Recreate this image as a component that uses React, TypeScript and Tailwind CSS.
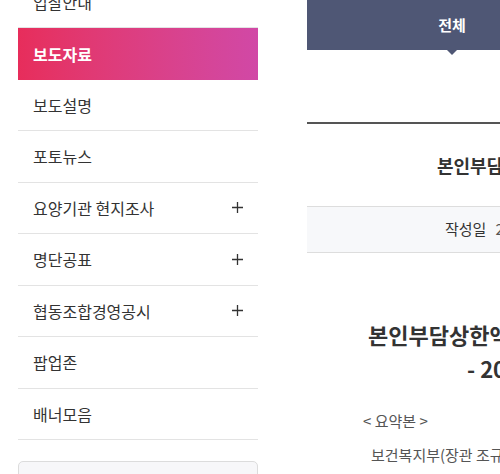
const font = "font-['Noto_Sans_CJK_KR','Noto_Sans',sans-serif]";

interface MenuItem {
  label: string;
  active?: boolean;
  sub?: boolean;
}

const menu: MenuItem[] = [
  { label: "입찰안내" },
  { label: "보도자료", active: true },
  { label: "보도설명" },
  { label: "포토뉴스" },
  { label: "요양기관 현지조사", sub: true },
  { label: "명단공표", sub: true },
  { label: "협동조합경영공시", sub: true },
  { label: "팝업존" },
  { label: "배너모음" },
];

function Plus() {
  return (
    <svg width="11" height="11" viewBox="0 0 11 11" className="shrink-0">
      <path d="M5.5 0v11M0 5.5h11" stroke="#333" strokeWidth="1.3" />
    </svg>
  );
}

function Sidebar() {
  return (
    <aside className="w-[240px] shrink-0 -mt-[23.5px]">
      <ul>
        {menu.map((m) =>
          m.active ? (
            <li
              key={m.label}
              className="h-[51.5px] flex items-center pl-[15px] bg-gradient-to-r from-[#e72d5b] to-[#d148a6] text-white font-bold text-[16px]"
            >
              {m.label}
            </li>
          ) : (
            <li
              key={m.label}
              className="h-[51.5px] flex items-center justify-between pl-[15px] pr-[15px] border-b border-[#e3e3e3] text-[#333] text-[16px]"
            >
              <span>{m.label}</span>
              {m.sub && <Plus />}
            </li>
          )
        )}
      </ul>
      <div className="mt-[20.5px] h-[40px] rounded-[5px] border border-[#dcdcdc] bg-[#f7f7f9]" />
    </aside>
  );
}

function Content() {
  return (
    <main className="ml-[49px] flex-1 min-w-0 overflow-hidden">
      <div className="relative w-[290px] h-[50px] bg-[#4f5775] flex items-center justify-center">
        <span className="text-white font-bold text-[15px]">전체</span>
        <span className="absolute left-1/2 -translate-x-1/2 top-[50px] w-0 h-0 border-x-[5px] border-x-transparent border-t-[5px] border-t-[#4f5775]" />
      </div>
      <div className="mt-[72px] border-t-2 border-[#555]" />
      <div className="h-[82px] flex items-center pl-[130px] whitespace-nowrap">
        <span className="text-[18px] font-bold text-[#333]">본인부담상한액 초과금 지급 안내</span>
      </div>
      <div className="h-[47px] bg-[#f7f8fa] border-y border-[#dddddd] flex items-center pl-[138px] whitespace-nowrap text-[15px] text-[#333]">
        <span>작성일</span>
        <span className="ml-[9px] text-[#555]">2024-08-22</span>
      </div>
      <div className="pt-[64px] whitespace-nowrap text-[#333]">
        <p className="pl-[61px] text-[22px] font-bold leading-[34px]">본인부담상한액 초과금 지급</p>
        <p className="pl-[160px] text-[22px] font-bold leading-[34px]">- 2024년</p>
        <p className="mt-[25px] pl-[56px] text-[15px] text-[#555] leading-[22px]">&lt; 요약본 &gt;</p>
        <p className="mt-[12px] pl-[64px] text-[15px] text-[#555] leading-[22px]">보건복지부(장관 조규홍)는</p>
      </div>
    </main>
  );
}

export default function App() {
  return (
    <div className={`w-[500px] h-[474px] overflow-hidden bg-white flex pl-[18px] ${font}`}>
      <Sidebar />
      <Content />
    </div>
  );
}
